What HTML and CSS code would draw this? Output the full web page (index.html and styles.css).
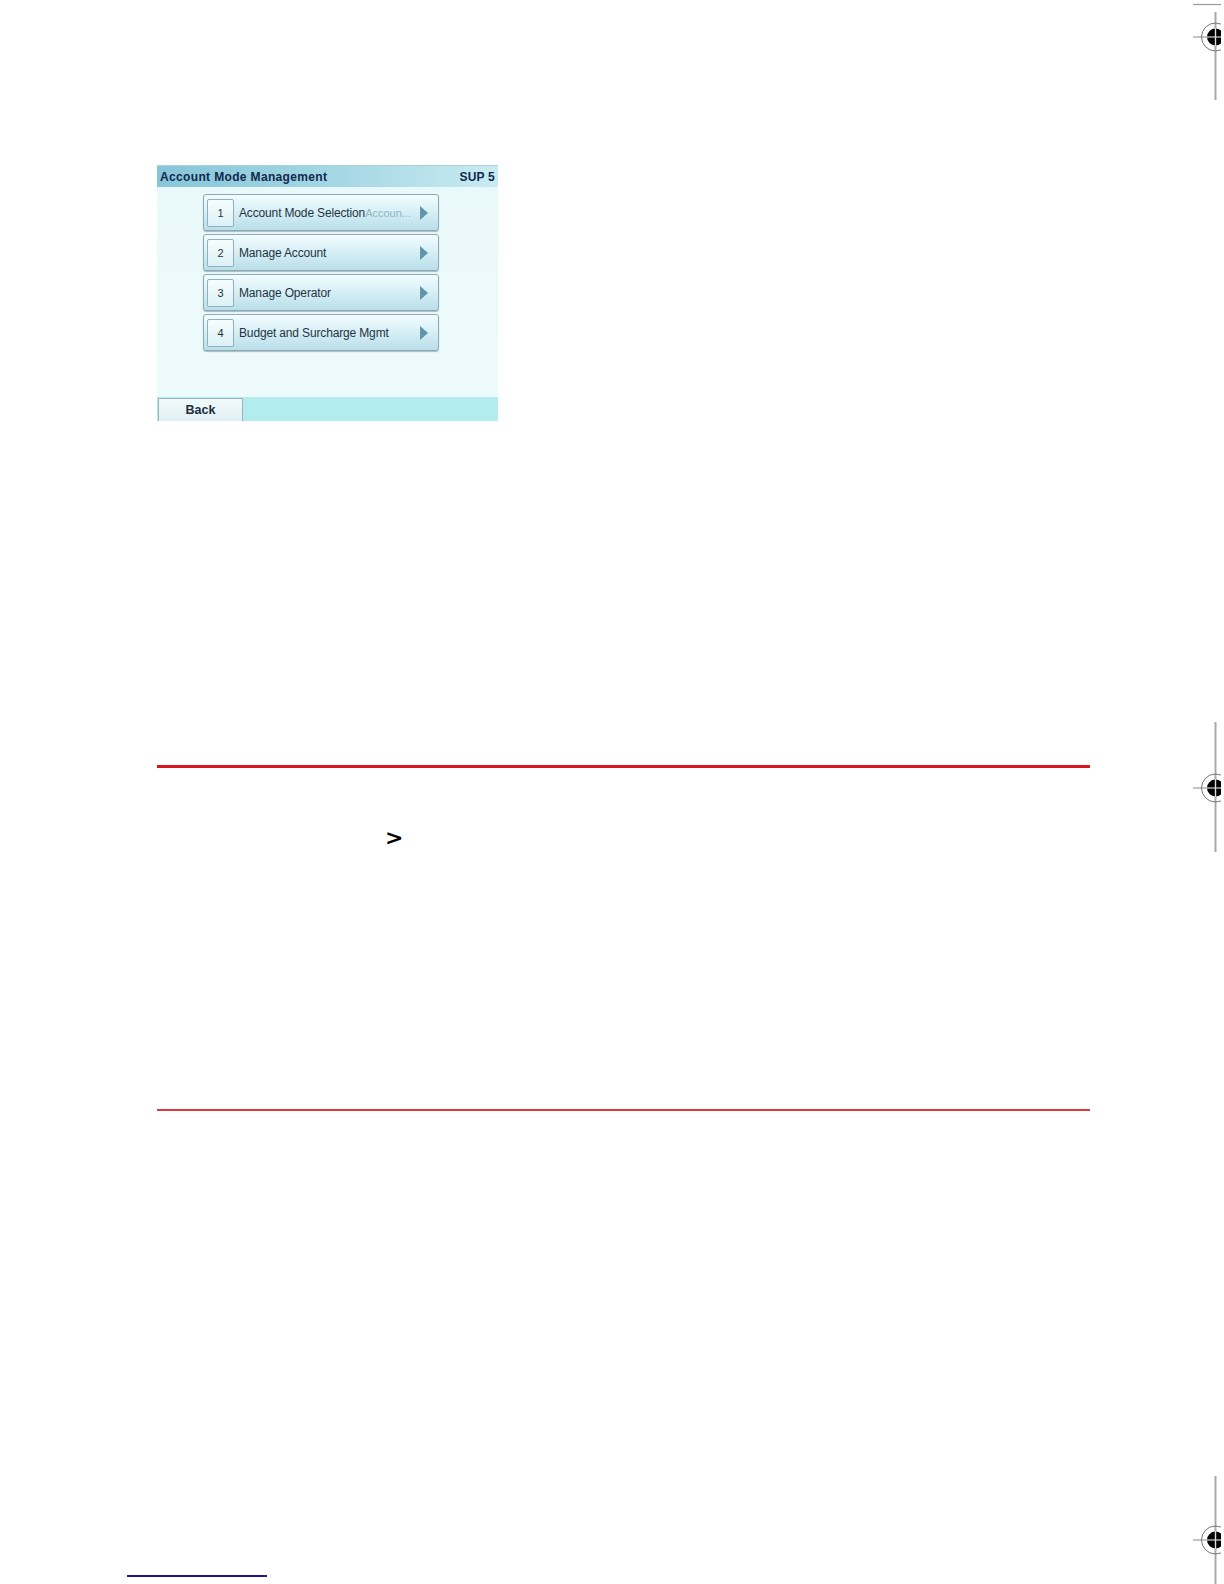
FILE: index.html
```html
<!DOCTYPE html>
<html>
<head>
<meta charset="utf-8">
<link rel="stylesheet" href="styles.css">
</head>
<body>
<div class="page">
  <div class="screen">
    <div class="scr-head">
      <span class="scr-title">Account Mode Management</span>
      <span class="scr-code">SUP 5</span>
    </div>
    <div class="scr-body">
      <div class="menu">
        <div class="item">
          <span class="num">1</span>
          <span class="label">Account Mode Selection</span>
          <span class="value">Accoun...</span>
          <span class="arrow"></span>
        </div>
        <div class="item">
          <span class="num">2</span>
          <span class="label">Manage Account</span>
          <span class="arrow"></span>
        </div>
        <div class="item">
          <span class="num">3</span>
          <span class="label">Manage Operator</span>
          <span class="arrow"></span>
        </div>
        <div class="item">
          <span class="num">4</span>
          <span class="label">Budget and Surcharge Mgmt</span>
          <span class="arrow"></span>
        </div>
      </div>
    </div>
    <div class="scr-foot">
      <span class="back">Back</span>
    </div>
  </div>

  <div class="rule rule-thick"></div>
  <div class="crumb">&gt;</div>
  <div class="rule rule-thin"></div>
  <div class="footer-link"></div>
</div>

<div class="regmark mark-top">
  <svg width="40" height="104" viewBox="0 0 40 104">
    <line x1="12" y1="4.5" x2="40" y2="4.5" stroke="#9a9a9a" stroke-width="1.2"/>
    <line x1="34.5" y1="12" x2="34.5" y2="100" stroke="#a8a8a8" stroke-width="2"/>
    <line x1="12" y1="37" x2="40" y2="37" stroke="#888" stroke-width="1"/>
    <circle cx="34.5" cy="37" r="14" fill="none" stroke="#777" stroke-width="1"/>
    <circle cx="34.5" cy="37" r="8.5" fill="#000"/>
    <line x1="26" y1="37" x2="40" y2="37" stroke="#fff" stroke-width="1"/>
    <line x1="34.5" y1="28" x2="34.5" y2="46" stroke="#ddd" stroke-width="1.4"/>
  </svg>
</div>
<div class="regmark mark-mid">
  <svg width="40" height="130" viewBox="0 0 40 130">
    <line x1="34.5" y1="0" x2="34.5" y2="130" stroke="#a8a8a8" stroke-width="2"/>
    <line x1="12" y1="66" x2="40" y2="66" stroke="#888" stroke-width="1"/>
    <circle cx="34.5" cy="66" r="14" fill="none" stroke="#777" stroke-width="1"/>
    <circle cx="34.5" cy="66" r="8.5" fill="#000"/>
    <line x1="26" y1="66" x2="40" y2="66" stroke="#fff" stroke-width="1"/>
    <line x1="34.5" y1="57" x2="34.5" y2="75" stroke="#ddd" stroke-width="1.4"/>
  </svg>
</div>
<div class="regmark mark-bot">
  <svg width="40" height="110" viewBox="0 0 40 110">
    <line x1="34.5" y1="0" x2="34.5" y2="110" stroke="#a8a8a8" stroke-width="2"/>
    <line x1="12" y1="64" x2="40" y2="64" stroke="#888" stroke-width="1"/>
    <circle cx="34.5" cy="64" r="14" fill="none" stroke="#777" stroke-width="1"/>
    <circle cx="34.5" cy="64" r="8.5" fill="#000"/>
    <line x1="26" y1="64" x2="40" y2="64" stroke="#fff" stroke-width="1"/>
    <line x1="34.5" y1="55" x2="34.5" y2="73" stroke="#ddd" stroke-width="1.4"/>
  </svg>
</div>
</body>
</html>
```

FILE: styles.css
```css
html, body {
  margin: 0;
  padding: 0;
  background: #fff;
}
body {
  width: 1224px;
  height: 1584px;
  position: relative;
  overflow: hidden;
  font-family: "Liberation Sans", Arial, sans-serif;
}
.page {
  padding: 165px 0 0 157px;
  display: flex;
  flex-direction: column;
}

/* device screen */
.screen {
  width: 341px;
  height: 256px;
  display: flex;
  flex-direction: column;
  background: linear-gradient(180deg, #e9f8fa 0%, #eefbfc 100%);
}
.scr-head {
  height: 22px;
  display: flex;
  align-items: center;
  justify-content: space-between;
  padding: 0 3px 0 3px;
  background: linear-gradient(90deg, #86c6d8 0%, #a6d8e4 55%, #c8ebf1 100%);
  border-top: 1px solid #a9d3de;
  box-sizing: border-box;
  font-size: 12px;
  font-weight: bold;
  color: #10294f;
}
.scr-title {
  letter-spacing: 0.35px;
}
.scr-code {
  letter-spacing: 0.2px;
}
.scr-body {
  flex: 1;
  padding: 7px 0 0 46px;
}
.menu {
  display: flex;
  flex-direction: column;
  gap: 3px;
  width: 236px;
}
.item {
  height: 37px;
  box-sizing: border-box;
  display: flex;
  align-items: center;
  border: 1px solid #8ea9b3;
  border-radius: 3px;
  background: linear-gradient(180deg, #f3fcfe 0%, #d8f0f6 45%, #b9deea 100%);
  box-shadow: 0 1px 1px rgba(80, 110, 120, 0.45);
  font-size: 12px;
  color: #24333f;
  position: relative;
}
.num {
  width: 27px;
  height: 28px;
  margin-left: 3px;
  box-sizing: border-box;
  border: 1px solid #90b0bb;
  border-radius: 2px;
  background: linear-gradient(180deg, #f6fdfe 0%, #dcf1f6 100%);
  display: flex;
  align-items: center;
  justify-content: center;
  font-size: 11px;
  color: #26323a;
}
.label {
  margin-left: 5px;
  letter-spacing: -0.15px;
}
.value {
  color: #8fb4c4;
  font-size: 11px;
}
.arrow {
  position: absolute;
  right: 10px;
  top: 11px;
  width: 0;
  height: 0;
  border-top: 7px solid transparent;
  border-bottom: 7px solid transparent;
  border-left: 8px solid #5f96a9;
}
.scr-foot {
  height: 24px;
  background: #b2ecee;
  display: flex;
  align-items: flex-end;
  padding-left: 1px;
}
.back {
  width: 85px;
  height: 23px;
  box-sizing: border-box;
  border: 1px solid #9bb3b9;
  border-bottom: none;
  background: linear-gradient(180deg, #f2fafb 0%, #dff0f3 100%);
  display: flex;
  align-items: center;
  justify-content: center;
  font-size: 12.5px;
  font-weight: bold;
  color: #1f2d3a;
}

/* document rules */
.rule {
  width: 933px;
}
.rule-thick {
  margin-top: 344px;
  height: 3px;
  background: #d6171b;
}
.crumb {
  margin: 55px 0 0 228px;
  height: 30px;
  font-family: "DejaVu Sans", sans-serif;
  font-size: 22px;
  font-weight: bold;
  line-height: 30px;
  color: #000;
}
.rule-thin {
  margin-top: 256px;
  height: 2px;
  background: #e03a3e;
}
.footer-link {
  margin: 464px 0 0 -30px;
  width: 140px;
  height: 2px;
  background: #1c1c84;
}

/* registration marks (print marks on the page canvas) */
.regmark {
  position: absolute;
  left: 1181px;
}
.mark-top { top: 0; }
.mark-mid { top: 722px; }
.mark-bot { top: 1476px; }
```
